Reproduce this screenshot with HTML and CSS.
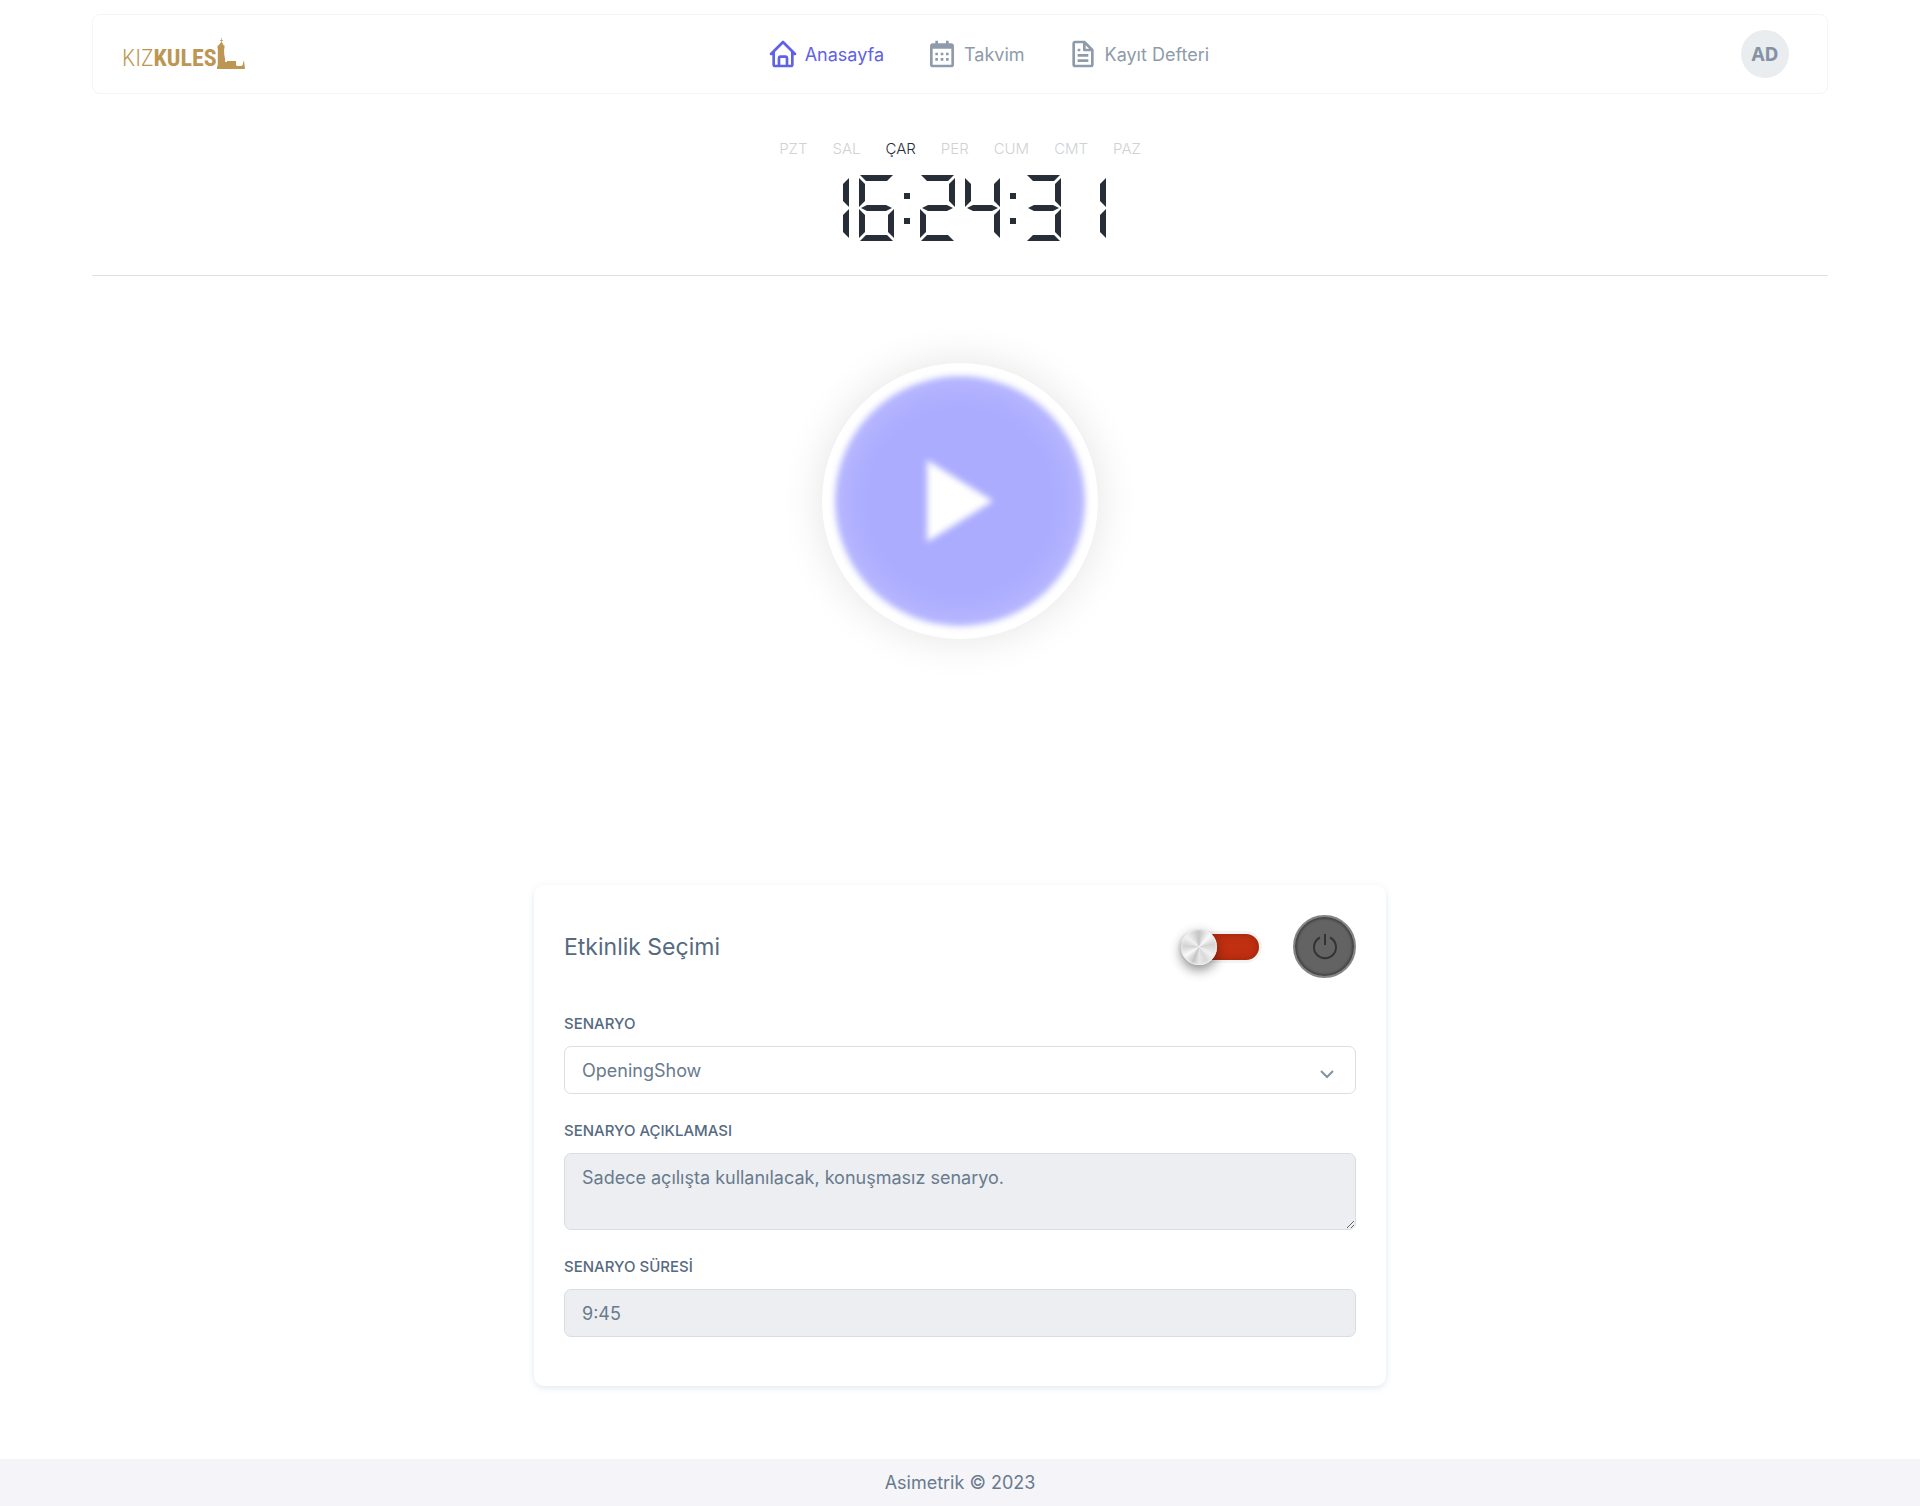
FILE: index.html
```html
<!DOCTYPE html>
<html lang="tr">
<head>
    <meta charset="UTF-8">
    <meta name="viewport" content="width=device-width, initial-scale=1.0">
    <title>Kız Kulesi - Anasayfa</title>
    <link rel="stylesheet" href="styles.css">
</head>
<body>
    <div class="container">
        <header class="navbar">
            <a href="#" class="logo">
                <span class="logo-text">KIZ<b>KULES</b></span>
                <svg class="logo-tower" viewBox="0 0 28 32" aria-hidden="true">
                    <path d="M4.200 0h.6v2h1.200v.7H4.800V4l2 3.600h.7v3h-.4v5l1 6V24H10v-1h9v4l1 1h4.500l1.200-1 .8-4h.5L28 31H0v-2l.8-2V10.600H.5v-3h1L4.200 4V2.700H3V2h1.200z"/>
                </svg>
            </a>
            <nav class="menu">
                <a href="#" class="menu-link active">
                    <svg viewBox="0 0 24 24" aria-hidden="true"><path d="M3 13h1v7c0 1.103.897 2 2 2h12c1.103 0 2-.897 2-2v-7h1a1 1 0 0 0 .707-1.707l-9-9a.999.999 0 0 0-1.414 0l-9 9A1 1 0 0 0 3 13zm7 7v-5h4v5h-4zm2-15.586 6 6V15l.001 5H16v-5c0-1.103-.897-2-2-2h-4c-1.103 0-2 .897-2 2v5H6v-9.586l6-6z"/></svg>
                    Anasayfa
                </a>
                <a href="#" class="menu-link">
                    <svg viewBox="0 0 24 24" aria-hidden="true"><path d="M7 11h2v2H7zm0 4h2v2H7zm4-4h2v2h-2zm0 4h2v2h-2zm4-4h2v2h-2zm0 4h2v2h-2z"/><path d="M5 22h14c1.103 0 2-.897 2-2V6c0-1.103-.897-2-2-2h-2V2h-2v2H9V2H7v2H5c-1.103 0-2 .897-2 2v14c0 1.103.897 2 2 2zM19 8l.001 12H5V8h14z"/></svg>
                    Takvim
                </a>
                <a href="#" class="menu-link">
                    <svg viewBox="0 0 24 24" aria-hidden="true"><path d="M19.903 8.586a.997.997 0 0 0-.196-.293l-6-6a.997.997 0 0 0-.293-.196c-.03-.014-.062-.022-.094-.033a.991.991 0 0 0-.259-.051C13.04 2.011 13.021 2 13 2H6c-1.103 0-2 .897-2 2v16c0 1.103.897 2 2 2h12c1.103 0 2-.897 2-2V9c0-.021-.011-.04-.013-.062a.952.952 0 0 0-.051-.259c-.01-.032-.019-.063-.033-.093zM16.586 8H14V5.414L16.586 8zM6 20V4h6v5a1 1 0 0 0 1 1h5l.002 10H6z"/><path d="M8 12h8v2H8zm0 4h8v2H8zm0-8h2v2H8z"/></svg>
                    Kayıt Defteri
                </a>
            </nav>
            <button type="button" class="avatar">AD</button>
        </header>

        <section class="clock">
            <div class="weekdays">
                <span>PZT</span>
                <span>SAL</span>
                <span class="today">ÇAR</span>
                <span>PER</span>
                <span>CUM</span>
                <span>CMT</span>
                <span>PAZ</span>
            </div>
            <!-- seven segment display, the class on each digit picks the lit segments -->
            <div class="digits" role="img" aria-label="16:24:31">
                <div class="digit one"><i class="d1"></i><i class="d2"></i><i class="d3"></i><i class="d4"></i><i class="d5"></i><i class="d6"></i><i class="d7"></i></div>
                <div class="digit six"><i class="d1"></i><i class="d2"></i><i class="d3"></i><i class="d4"></i><i class="d5"></i><i class="d6"></i><i class="d7"></i></div>
                <div class="dots"></div>
                <div class="digit two"><i class="d1"></i><i class="d2"></i><i class="d3"></i><i class="d4"></i><i class="d5"></i><i class="d6"></i><i class="d7"></i></div>
                <div class="digit four"><i class="d1"></i><i class="d2"></i><i class="d3"></i><i class="d4"></i><i class="d5"></i><i class="d6"></i><i class="d7"></i></div>
                <div class="dots"></div>
                <div class="digit three"><i class="d1"></i><i class="d2"></i><i class="d3"></i><i class="d4"></i><i class="d5"></i><i class="d6"></i><i class="d7"></i></div>
                <div class="digit one"><i class="d1"></i><i class="d2"></i><i class="d3"></i><i class="d4"></i><i class="d5"></i><i class="d6"></i><i class="d7"></i></div>
            </div>
        </section>

        <main>
            <button type="button" class="play" aria-label="Başlat">
                <span class="play-disc">
                    <svg viewBox="0 0 66 82" aria-hidden="true"><path d="M0 0L66 41L0 82z"/></svg>
                </span>
            </button>

            <form class="card">
                <div class="card-header">
                    <h5>Etkinlik Seçimi</h5>
                    <input type="checkbox" class="switch" aria-label="Etkinlik durumu">
                    <button type="button" class="power" aria-label="Güç">
                        <svg viewBox="0 0 26 26" aria-hidden="true"><path d="M8 3.500A11 11 0 1 0 18 3.500M13 0v11"/></svg>
                    </button>
                </div>
                <div class="field">
                    <label for="scenario">SENARYO</label>
                    <select id="scenario">
                        <option>OpeningShow</option>
                    </select>
                </div>
                <div class="field">
                    <label for="description">SENARYO AÇIKLAMASI</label>
                    <textarea id="description" readonly>Sadece açılışta kullanılacak, konuşmasız senaryo.</textarea>
                </div>
                <div class="field">
                    <label for="duration">SENARYO SÜRESİ</label>
                    <input type="text" id="duration" value="9:45" readonly>
                </div>
            </form>
        </main>
    </div>

    <footer class="footer">Asimetrik © 2023</footer>
</body>
</html>
```
FILE: styles.css
```css
* {
    box-sizing: border-box;
}
body {
    margin: 0;
    min-height: 100vh;
    display: flex;
    flex-direction: column;
    font-family: Inter, "Liberation Sans", sans-serif;
    font-size: 18px;
    color: #697a8d;
    background-color: #fff;
}
.container {
    padding: 14px 92px 0;
}

/* Navbar */
.navbar {
    display: flex;
    align-items: center;
    justify-content: space-between;
    height: 80px;
    padding: 0 38px 0 29px;
    border: 1px solid #f5f5f6;
    border-radius: 8px;
}
.logo {
    display: flex;
    align-items: flex-end;
    color: #bd9654;
    text-decoration: none;
}
.logo-text {
    font-family: "Roboto Condensed", "Liberation Sans Narrow", Roboto, sans-serif;
    font-size: 24px;
    font-weight: 300;
    line-height: 24px;
}
.logo-text b {
    font-weight: 700;
}
.logo-tower {
    width: 28px;
    height: 32px;
    fill: #bd9654;
}
.menu {
    display: flex;
    gap: 42px;
    margin-right: 10px;
}
.menu-link {
    display: flex;
    align-items: center;
    gap: 6px;
    color: #8e9baa;
    text-decoration: none;
}
.menu-link svg {
    width: 32px;
    height: 32px;
    fill: currentColor;
}
.menu-link.active {
    color: #5f61e6;
}
.avatar {
    width: 48px;
    height: 48px;
    padding: 0;
    border: none;
    border-radius: 50%;
    background-color: #e9edf0;
    color: #8592a3;
    font-family: "Noto Sans", sans-serif;
    font-size: 19px;
    font-weight: 700;
}

/* Clock */
.clock {
    display: flex;
    flex-direction: column;
    align-items: center;
    gap: 15px;
    padding: 44px 0 34px;
    border-bottom: 1px solid #dfe1e3;
}
.weekdays {
    display: flex;
    gap: 25px;
    font-size: 15px;
    font-weight: 300;
    line-height: 22px;
    color: #cfd2d4;
}
.weekdays .today {
    color: #272e38;
}
.digits {
    display: flex;
    gap: 10px;
    color: #272e38;
}
.digit {
    position: relative;
    width: 35px;
    height: 66px;
}
.digit i {
    position: absolute;
    background-color: currentColor;
}
.d1, .d2, .d3 {
    left: 1px;
    width: 33px;
    height: 6px;
}
.d1 {
    top: 0;
    clip-path: polygon(0 0, 100% 0, calc(100% - 6px) 100%, 6px 100%);
}
.d2 {
    top: 30px;
    clip-path: polygon(1px 50%, 7px 0, calc(100% - 7px) 0, calc(100% - 1px) 50%, calc(100% - 7px) 100%, 7px 100%);
}
.d3 {
    bottom: 0;
    clip-path: polygon(6px 0, calc(100% - 6px) 0, 100% 100%, 0 100%);
}
.d4, .d5, .d6, .d7 {
    width: 6px;
    height: 29px;
}
.d4, .d5 {
    top: 3px;
}
.d6, .d7 {
    bottom: 3px;
}
.d4, .d6 {
    left: 0;
    clip-path: polygon(0 0, 100% 6px, 100% calc(100% - 6px), 0 100%);
}
.d5, .d7 {
    right: 0;
    clip-path: polygon(100% 0, 0 6px, 0 calc(100% - 6px), 100% 100%);
}
.one .d1, .one .d2, .one .d3, .one .d4, .one .d6,
.two .d4, .two .d7,
.three .d4, .three .d6,
.four .d1, .four .d3, .four .d6,
.six .d5 {
    display: none;
}
.dots {
    display: flex;
    flex-direction: column;
    justify-content: space-between;
    width: 6px;
    padding: 18px 0 17px;
}
.dots::before,
.dots::after {
    content: "";
    height: 6px;
    background-color: currentColor;
}

/* Play button */
main {
    display: flex;
    flex-direction: column;
    align-items: center;
}
.play {
    width: 276px;
    height: 276px;
    margin: 87px 0 246px;
    padding: 13px;
    border: none;
    border-radius: 50%;
    background-color: #fff;
    box-shadow: 0 0 44px rgba(0, 0, 0, 0.11);
    cursor: pointer;
}
.play-disc {
    display: flex;
    align-items: center;
    justify-content: center;
    height: 100%;
    border-radius: 50%;
    background-color: #acacff;
    box-shadow: inset 0 0 40px rgba(255, 255, 255, 0.25);
    filter: blur(3px);
}
.play-disc svg {
    width: 66px;
    height: 82px;
    fill: #fff;
}

/* Card */
.card {
    display: flex;
    flex-direction: column;
    gap: 28px;
    width: 100%;
    max-width: 852px;
    margin-bottom: 72px;
    padding: 30px 30px 49px;
    border-radius: 10px;
    background-color: #fff;
    box-shadow: 0 2px 7px rgba(67, 120, 160, 0.16);
}
.card-header {
    display: flex;
    align-items: center;
    gap: 34px;
    margin-bottom: 9px;
}
.card-header h5 {
    flex: 1;
    margin: 0;
    font-size: 23px;
    font-weight: 400;
    color: #566a7f;
}
.switch {
    appearance: none;
    position: relative;
    width: 78px;
    height: 26px;
    margin: 0;
    border-radius: 13px;
    background-color: #c23012;
    box-shadow: inset 0 0 8px rgba(90, 20, 0, 0.4), 0 0 0 3px #f6f4f3;
    cursor: pointer;
}
.switch::before {
    content: "";
    position: absolute;
    top: -5px;
    left: 0;
    width: 36px;
    height: 36px;
    border-radius: 50%;
    background: conic-gradient(#c4c4c4, #fafafa 12%, #d2d2d2 22%, #f2f2f2 34%, #d8d8d8 42%, #e8e8e8 50%, #c4c4c4 56%, #fafafa 66%, #d2d2d2 76%, #f2f2f2 86%, #c4c4c4);
    box-shadow: inset 0 0 2px 1px #eee, 0 5px 12px rgba(0, 0, 0, 0.45);
}
.switch:checked::before {
    left: 42px;
}
.power {
    display: flex;
    align-items: center;
    justify-content: center;
    width: 63px;
    height: 63px;
    padding: 0;
    border: 2px solid #858585;
    border-radius: 50%;
    background-color: #636363;
    box-shadow: inset 0 0 2px 2px #454545;
    cursor: pointer;
}
.power svg {
    width: 26px;
    height: 26px;
    overflow: visible;
    fill: none;
    stroke: #333;
    stroke-width: 2;
}
.field {
    display: flex;
    flex-direction: column;
    gap: 13px;
}
.field label {
    font-size: 15px;
    font-weight: 500;
    line-height: 18px;
    color: #566a7f;
}
.field select,
.field textarea,
.field input {
    width: 100%;
    height: 48px;
    margin: 0;
    padding: 0 17px;
    border: 1px solid #d9dee3;
    border-radius: 7px;
    outline: none;
    background-color: #eceef1;
    color: #697a8d;
    font-family: inherit;
    font-size: 18px;
}
.field select {
    appearance: none;
    background: #fff url("data:image/svg+xml,%3Csvg xmlns='http://www.w3.org/2000/svg' width='14' height='9' fill='none' stroke='%238592a3' stroke-width='2'%3E%3Cpath d='M1 1l6 6 6-6'/%3E%3C/svg%3E") no-repeat right 21px top 23px;
}
.field textarea {
    display: block;
    height: 77px;
    padding: 10px 17px;
    line-height: 28px;
    resize: vertical;
}

/* Footer */
.footer {
    margin-top: auto;
    height: 47px;
    line-height: 48px;
    text-align: center;
    background-color: #f4f4f9;
}
```
